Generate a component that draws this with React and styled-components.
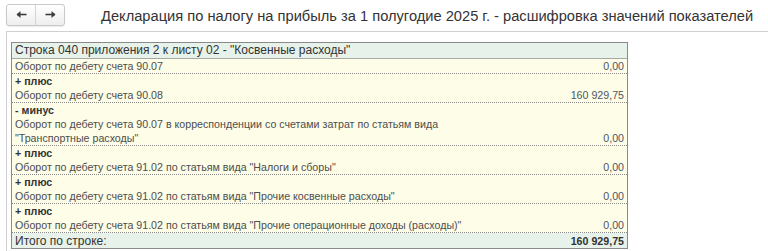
import React from "react";
import styled, { createGlobalStyle } from "styled-components";

const rows = [
	{ text: "Оборот по дебету счета 90.07", value: "0,00" },
	{ sign: "+ плюс", text: "Оборот по дебету счета 90.08", value: "160 929,75" },
	{
		sign: "- минус",
		text: "Оборот по дебету счета 90.07 в корреспонденции со счетами затрат по статьям вида",
		extra: "\"Транспортные расходы\"",
		value: "0,00",
	},
	{ sign: "+ плюс", text: "Оборот по дебету счета 91.02 по статьям вида \"Налоги и сборы\"", value: "0,00" },
	{ sign: "+ плюс", text: "Оборот по дебету счета 91.02 по статьям вида \"Прочие косвенные расходы\"", value: "0,00" },
	{
		sign: "+ плюс",
		text: "Оборот по дебету счета 91.02 по статьям вида \"Прочие операционные доходы (расходы)\"",
		value: "0,00",
	},
];

const Arrow = ({ dir }) => (
	<svg width="11" height="9" viewBox="0 0 11 9">
		<g transform={dir === "right" ? "translate(11,0) scale(-1,1)" : undefined}>
			<path d="M1 4.5 H10.5" stroke="#3d3d3d" strokeWidth="1.6" />
			<path d="M0.5 4.5 L4.5 1 V8 Z" fill="#3d3d3d" />
		</g>
	</svg>
);

const App = () => {
	return (
		<>
			<GlobalStyle />
			<TopBar>
				<NavGroup>
					<NavButton>
						<Arrow dir="left" />
					</NavButton>
					<NavButton>
						<Arrow dir="right" />
					</NavButton>
				</NavGroup>
				<Title>Декларация по налогу на прибыль за 1 полугодие 2025 г. - расшифровка значений показателей</Title>
			</TopBar>
			<Panel>
				<Report>
					<HeadRow>Строка 040 приложения 2 к листу 02 - "Косвенные расходы"</HeadRow>
					{rows.map((row, i) => (
						<Group key={i}>
							{row.sign && <Sign>{row.sign}</Sign>}
							{row.extra ? (
								<>
									<Line>{row.text}</Line>
									<Line>
										<span>{row.extra}</span>
										<Value>{row.value}</Value>
									</Line>
								</>
							) : (
								<Line>
									<span>{row.text}</span>
									<Value>{row.value}</Value>
								</Line>
							)}
						</Group>
					))}
					<TotalRow>
						<span>Итого по строке:</span>
						<TotalValue>160 929,75</TotalValue>
					</TotalRow>
				</Report>
			</Panel>
		</>
	);
};

const GlobalStyle = createGlobalStyle`
	body {
		margin: 0;
		background: #fff;
		font-family: "Liberation Sans", Arial, sans-serif;
	}
`;

const TopBar = styled.div`
	display: flex;
	align-items: center;
	height: 31px;
	padding: 0 0 0 6px;
	box-sizing: border-box;
`;
const NavGroup = styled.div`
	display: flex;
	height: 20px;
	margin-top: -2px;
	border: 1px solid #c9c9c9;
	border-radius: 3px;
	background: linear-gradient(#ffffff, #eeeeee);
	box-shadow: 0 1px 1px rgba(0, 0, 0, 0.08);
`;
const NavButton = styled.div`
	display: flex;
	align-items: center;
	justify-content: center;
	width: 28px;
	& + & {
		border-left: 1px solid #d4d4d4;
	}
`;
const Title = styled.h1`
	margin: 0 0 0 36px;
	font-size: 14.67px;
	font-weight: normal;
	color: #333;
	white-space: nowrap;
`;

const Panel = styled.div`
	margin-left: 6px;
	padding: 10px 0 0 4px;
	border-top: 1px solid #d0d0d0;
	border-left: 1px solid #d0d0d0;
	height: 220px;
	box-sizing: border-box;
`;
const Report = styled.div`
	width: 617px;
	border: 1px solid #8a8a8a;
	box-sizing: border-box;
	background: #fdfde8;
	font-size: 10.67px;
	color: #4d4d4d;
`;
const HeadRow = styled.div`
	height: 15px;
	line-height: 15px;
	padding-left: 3px;
	background: #e6f2ea;
	border-bottom: 1px solid #a8a8a8;
	font-size: 12px;
	color: #333;
	white-space: nowrap;
`;
const Group = styled.div`
	border-bottom: 1px dotted #8a8a8a;
`;
const Sign = styled.div`
	height: 14px;
	line-height: 14px;
	padding-left: 3px;
	font-weight: bold;
	color: #333;
`;
const Line = styled.div`
	display: flex;
	justify-content: space-between;
	height: 14px;
	line-height: 14px;
	padding: 0 3px;
	white-space: nowrap;
`;
const Value = styled.span`
	color: #4d5566;
`;
const TotalRow = styled.div`
	display: flex;
	justify-content: space-between;
	align-items: center;
	height: 15px;
	padding: 0 3px;
	background: #e6f2ea;
	font-size: 12px;
	color: #333;
`;
const TotalValue = styled.span`
	font-size: 10.67px;
	font-weight: bold;
`;

export default App;
